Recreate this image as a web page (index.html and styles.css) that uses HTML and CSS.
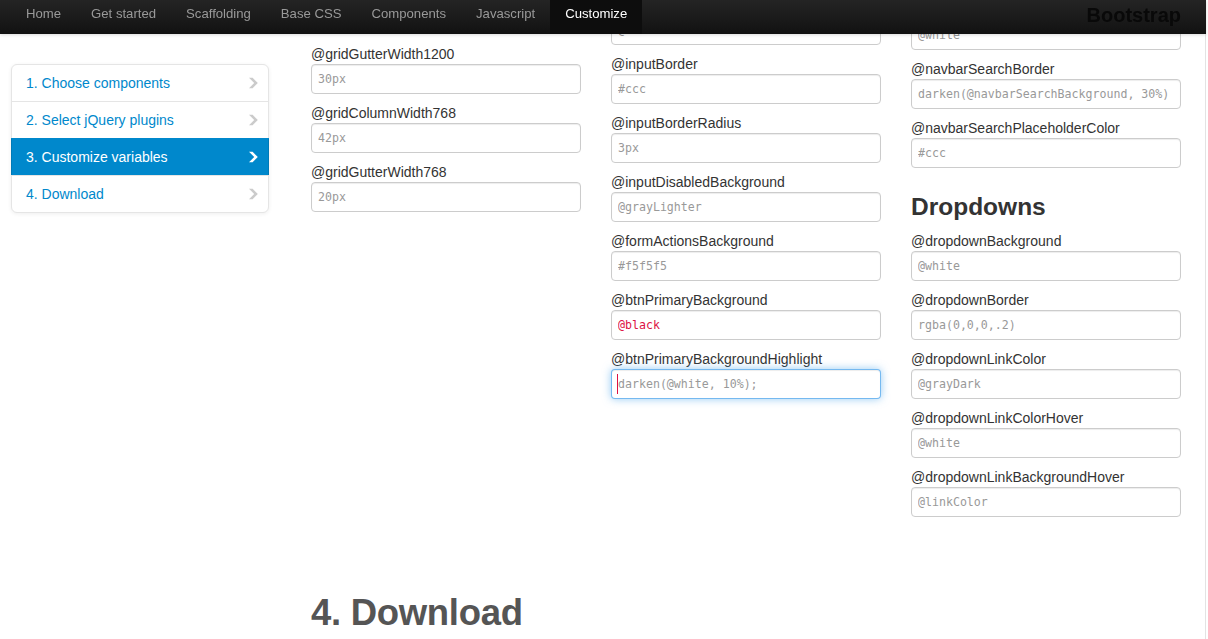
FILE: index.html
```html
<!DOCTYPE html>
<html lang="en">
<head>
<meta charset="utf-8">
<title>Customize · Bootstrap</title>
<link rel="stylesheet" href="styles.css">
</head>
<body>
<div class="page">
  <header class="navbar">
    <div class="navbar-inner">
      <ul class="nav">
        <li><a href="#">Home</a></li>
        <li><a href="#">Get started</a></li>
        <li><a href="#">Scaffolding</a></li>
        <li><a href="#">Base CSS</a></li>
        <li><a href="#">Components</a></li>
        <li><a href="#">Javascript</a></li>
        <li class="active"><a href="#">Customize</a></li>
      </ul>
      <a class="brand" href="#">Bootstrap</a>
    </div>
  </header>

  <div class="container">
    <aside class="sidebar">
      <ul class="sidenav">
        <li><a href="#">1. Choose components <svg class="chev" viewBox="0 0 14 14" width="14" height="14"><polygon points="3,1.8 6.6,1.8 11.8,7 6.6,12.2 3,12.2 8.2,7"/></svg></a></li>
        <li><a href="#">2. Select jQuery plugins <svg class="chev" viewBox="0 0 14 14" width="14" height="14"><polygon points="3,1.8 6.6,1.8 11.8,7 6.6,12.2 3,12.2 8.2,7"/></svg></a></li>
        <li class="active"><a href="#">3. Customize variables <svg class="chev" viewBox="0 0 14 14" width="14" height="14"><polygon points="3,1.8 6.6,1.8 11.8,7 6.6,12.2 3,12.2 8.2,7"/></svg></a></li>
        <li><a href="#">4. Download <svg class="chev" viewBox="0 0 14 14" width="14" height="14"><polygon points="3,1.8 6.6,1.8 11.8,7 6.6,12.2 3,12.2 8.2,7"/></svg></a></li>
      </ul>
    </aside>

    <main class="content">
      <div class="var-row">
        <div class="var-col var-col--a">
          <label>@gridGutterWidth1200</label>
          <input class="field" type="text" placeholder="30px">
          <label>@gridColumnWidth768</label>
          <input class="field" type="text" placeholder="42px">
          <label>@gridGutterWidth768</label>
          <input class="field" type="text" placeholder="20px">
        </div>

        <div class="var-col var-col--b">
          <input class="field" type="text" placeholder="@white">
          <label>@inputBorder</label>
          <input class="field" type="text" placeholder="#ccc">
          <label>@inputBorderRadius</label>
          <input class="field" type="text" placeholder="3px">
          <label>@inputDisabledBackground</label>
          <input class="field" type="text" placeholder="@grayLighter">
          <label>@formActionsBackground</label>
          <input class="field" type="text" placeholder="#f5f5f5">
          <label>@btnPrimaryBackground</label>
          <input class="field field--changed" type="text" value="@black">
          <label>@btnPrimaryBackgroundHighlight</label>
          <div class="field-wrap field-wrap--focus">
            <input class="field field--focus" type="text" placeholder="darken(@white, 10%);">
          </div>
        </div>

        <div class="var-col var-col--c">
          <input class="field" type="text" placeholder="@white">
          <label>@navbarSearchBorder</label>
          <input class="field" type="text" placeholder="darken(@navbarSearchBackground, 30%)">
          <label>@navbarSearchPlaceholderColor</label>
          <input class="field" type="text" placeholder="#ccc">
          <h3 class="group-title">Dropdowns</h3>
          <label>@dropdownBackground</label>
          <input class="field" type="text" placeholder="@white">
          <label>@dropdownBorder</label>
          <input class="field" type="text" placeholder="rgba(0,0,0,.2)">
          <label>@dropdownLinkColor</label>
          <input class="field" type="text" placeholder="@grayDark">
          <label>@dropdownLinkColorHover</label>
          <input class="field" type="text" placeholder="@white">
          <label>@dropdownLinkBackgroundHover</label>
          <input class="field" type="text" placeholder="@linkColor">
        </div>
      </div>

      <section class="download">
        <h1 class="section-title">4. Download</h1>
      </section>
    </main>
  </div>
</div>
</body>
</html>
```

FILE: styles.css
```css
html, body {
  margin: 0;
  padding: 0;
}

body {
  font-family: "Liberation Sans", Arial, Helvetica, sans-serif;
  font-size: 14px;
  line-height: 20px;
  color: #333;
  background: #fff;
  overflow: hidden;
}

.page {
  width: 1205px;
  min-height: 639px;
  border-right: 1px solid #e3e3e3;
}

/* ---------- navbar ---------- */
.navbar {
  position: fixed;
  top: 0;
  left: 0;
  width: 1206px;
  height: 34px;
  z-index: 10;
  background: linear-gradient(to bottom, #242424, #121212);
  box-shadow: 0 1px 3px rgba(0, 0, 0, 0.15);
}

.navbar-inner {
  width: 1170px;
  margin-left: 11px;
  display: flex;
  justify-content: space-between;
  align-items: flex-start;
}

.nav {
  display: flex;
  list-style: none;
  margin: 0;
  padding: 0;
}

.nav a {
  display: block;
  padding: 4px 15px 10px;
  font-size: 13.15px;
  line-height: 20px;
  color: #999;
  text-decoration: none;
}

.nav .active a {
  color: #fff;
  background: #0d0d0d;
}

.brand {
  display: block;
  padding: 5px 0 9px;
  font-size: 20px;
  font-weight: bold;
  line-height: 20px;
  color: #090909;
  text-decoration: none;
}

/* ---------- layout ---------- */
.container {
  width: 1170px;
  margin-left: 11px;
  display: flex;
  gap: 30px;
  align-items: flex-start;
}

.sidebar {
  flex: none;
  width: 270px;
}

.content {
  flex: none;
  width: 870px;
}

/* ---------- side nav ---------- */
.sidenav {
  box-sizing: border-box;
  width: 258px;
  margin: 64px 0 0;
  padding: 0;
  list-style: none;
  background: #fff;
  border: 1px solid #e5e5e5;
  border-radius: 6px;
  box-shadow: 0 1px 4px rgba(0, 0, 0, 0.065);
}

.sidenav a {
  display: flex;
  justify-content: space-between;
  align-items: center;
  padding: 8px 14px;
  line-height: 20px;
  font-size: 14px;
  color: #0088cc;
  text-decoration: none;
  border-top: 1px solid #e5e5e5;
}

.sidenav li:first-child a {
  border-top: 0;
}

.sidenav .active a {
  position: relative;
  z-index: 2;
  margin: 0 -1px;
  padding: 8px 15px 8px 15px;
  color: #fff;
  background: #0088cc;
  border-top-color: #0088cc;
  box-shadow: inset 1px 0 0 rgba(0, 0, 0, 0.1), inset -1px 0 0 rgba(0, 0, 0, 0.1);
}

.chev {
  flex: none;
  margin-right: -6px;
  fill: #000;
  opacity: 0.2;
}

.sidenav .active .chev {
  fill: #fff;
  opacity: 1;
}

/* ---------- variables ---------- */
.var-row {
  display: flex;
  gap: 30px;
  align-items: flex-start;
}

.var-col {
  flex: none;
  width: 270px;
}

.var-col--a { padding-top: 44px; }
.var-col--b { padding-top: 15px; }
.var-col--c { padding-top: 20px; }

.var-col label {
  display: block;
  font-size: 14px;
  line-height: 20px;
  color: #333;
}

.field {
  display: block;
  box-sizing: border-box;
  width: 270px;
  height: 30px;
  margin: 0 0 9px;
  padding: 4px 6px;
  border: 1px solid #ccc;
  border-radius: 4px;
  background: #fff;
  box-shadow: inset 0 1px 1px rgba(0, 0, 0, 0.075);
  font-family: "DejaVu Sans Mono", "Liberation Mono", monospace;
  font-size: 11.6px;
  line-height: 20px;
  color: #555;
  outline: none;
}

.field::placeholder {
  color: #999;
  opacity: 1;
}

.field--changed {
  color: #dd1144;
}

.field-wrap {
  position: relative;
  margin: 0 0 9px;
}

.field-wrap .field {
  margin: 0;
}

.field--focus {
  border-color: rgba(82, 168, 236, 0.8);
  box-shadow: inset 0 1px 1px rgba(0, 0, 0, 0.075), 0 0 8px rgba(82, 168, 236, 0.6);
}

.field-wrap--focus::after {
  content: "";
  position: absolute;
  left: 6px;
  top: 5px;
  width: 1px;
  height: 20px;
  background: #dd1144;
}

.group-title {
  margin: 19px 0 4px;
  font-size: 24.5px;
  line-height: 40px;
  font-weight: bold;
  color: #333;
}

/* ---------- download ---------- */
.download {
  margin-top: 67px;
}

.section-title {
  margin: 0;
  font-size: 36.5px;
  line-height: 40px;
  font-weight: bold;
  letter-spacing: -0.3px;
  color: #555;
}
```
